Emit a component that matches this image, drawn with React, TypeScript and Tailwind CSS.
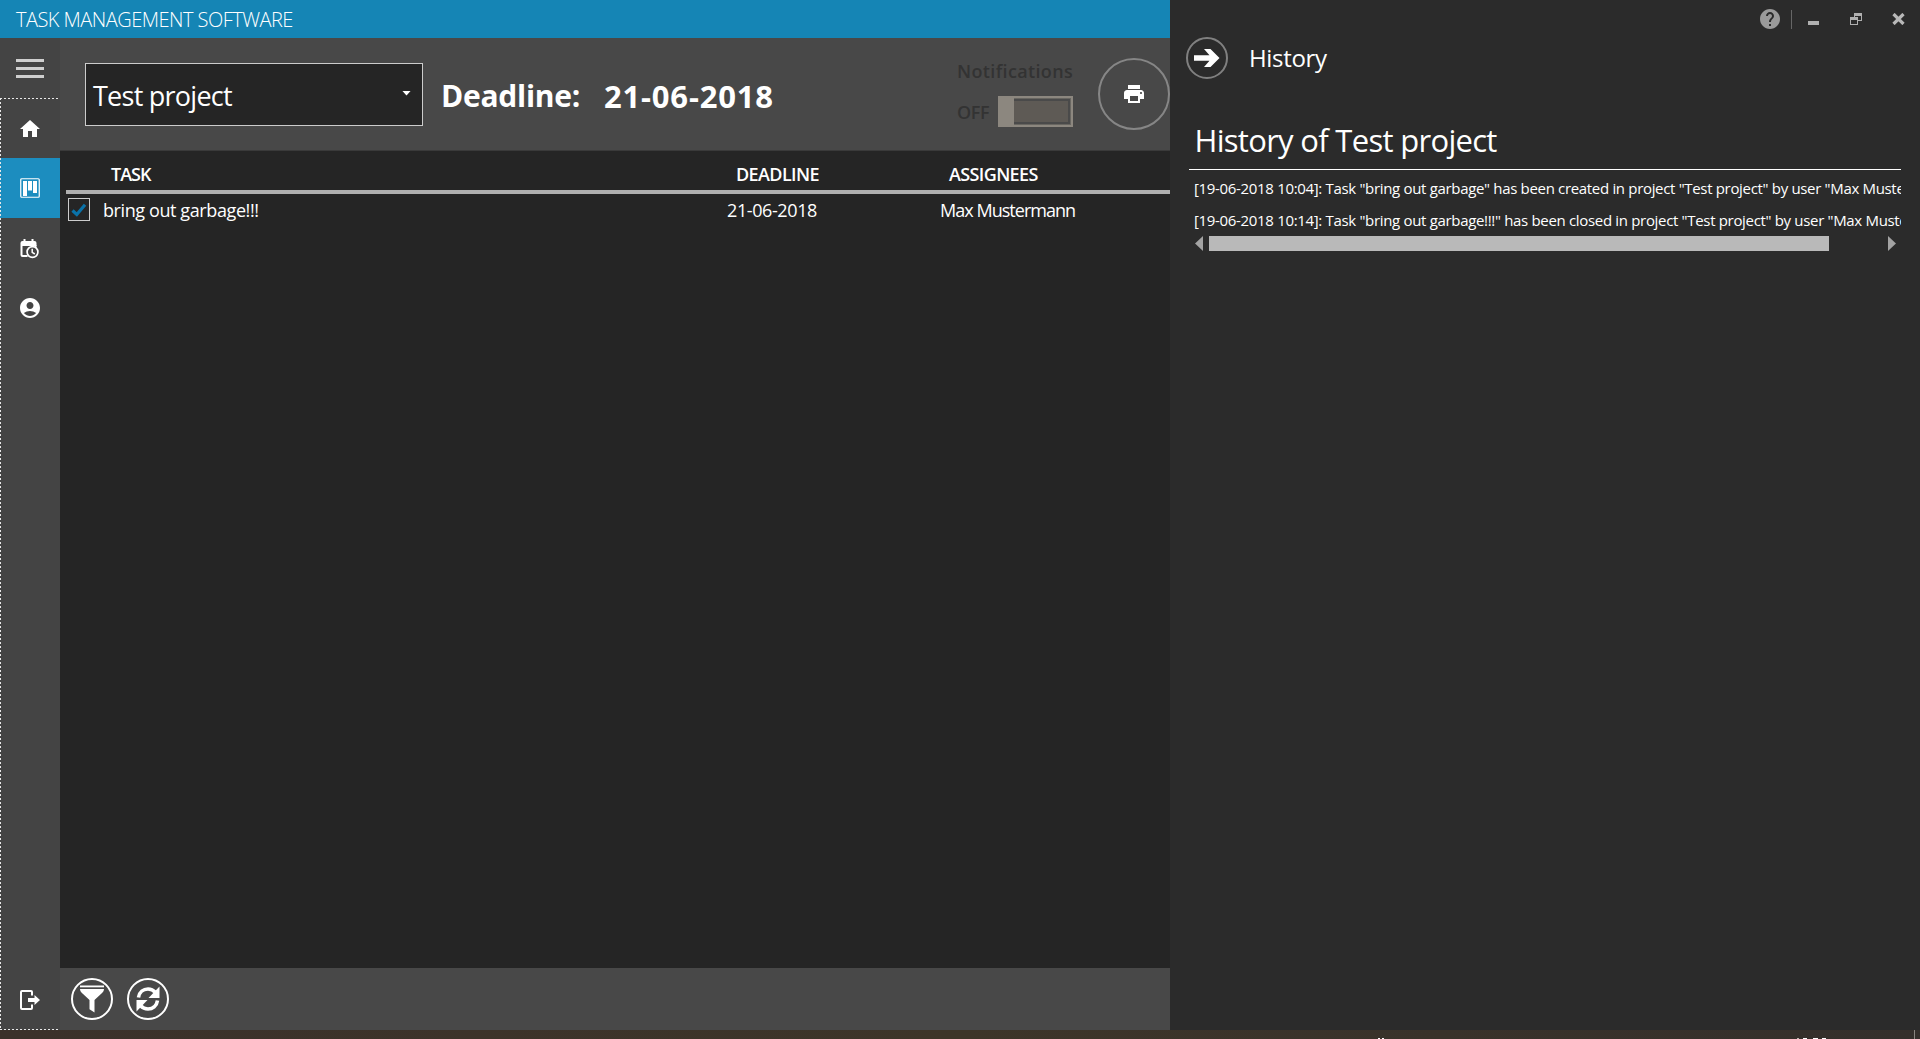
import type { ReactNode } from "react";
import { MdAccountCircle, MdHelp, MdHome, MdPrint } from "react-icons/md";

function NavItem({ active, children }: { active?: boolean; children: ReactNode }) {
  return (
    <button
      className={
        active
          ? "flex h-[60px] w-full items-center justify-center bg-[#1c8dbf]"
          : "flex h-[60px] w-full items-center justify-center"
      }
    >
      {children}
    </button>
  );
}

function BoardIcon() {
  return (
    <svg width="20" height="20" viewBox="0 0 20 20" fill="none">
      <rect x="0.75" y="0.75" width="18.5" height="18.5" rx="1" stroke="white" strokeWidth="1.2" />
      <rect x="3" y="3" width="4" height="15" fill="white" />
      <rect x="8" y="3" width="4" height="9.5" fill="white" />
      <rect x="13" y="3" width="4" height="12" fill="white" />
    </svg>
  );
}

function CalendarClockIcon() {
  return (
    <svg width="20" height="21" viewBox="0 0 20 21" fill="none">
      <path
        d="M3 1v2H2a2 2 0 0 0-2 2v12a2 2 0 0 0 2 2h5v-2H2V8h14V5a2 2 0 0 0-2-2h-1V1h-2v2H5V1z"
        fill="white"
        transform="translate(0.5 0)"
      />
      <path d="M15.500 7v4" stroke="white" strokeWidth="2" />
      <circle cx="12.5" cy="14" r="5.4" fill="#444444" stroke="white" strokeWidth="1.7" />
      <path d="M12.2 10.8v3.6l2.6 1.6" stroke="white" strokeWidth="1.5" />
    </svg>
  );
}

function LogoutIcon() {
  return (
    <svg width="20" height="20" viewBox="0 0 20 20" fill="none">
      <path d="M12 5.5V2a1 1 0 0 0-1-1H2a1 1 0 0 0-1 1v16a1 1 0 0 0 1 1h9a1 1 0 0 0 1-1v-3.500" stroke="white" strokeWidth="2" />
      <path d="M8 8h6.500V5L20 10l-5.500 5v-3H8z" fill="white" />
    </svg>
  );
}

function FilterIcon() {
  return (
    <svg width="26" height="28" viewBox="0 0 26 28" fill="white">
      <rect x="1" y="0.500" width="24" height="1.800" />
      <path d="M1 4h24c0 2-1 3-2.500 4.500L15.500 15v12.500l-5-3.200V15L3.500 8.500C2 7 1 6 1 4z" />
    </svg>
  );
}

function RefreshIcon() {
  return (
    <svg width="24" height="28" viewBox="0 0 24 28" fill="none">
      <path d="M2.500 12.500C3.300 6.800 7.500 4 12 4c3 0 5.500 1.200 7.300 3.200" stroke="white" strokeWidth="3.600" />
      <path d="M23.500 1.500V13H12.500z" fill="white" />
      <path d="M21.500 15.500C20.700 21.200 16.500 24 12 24c-3 0-5.500-1.200-7.300-3.200" stroke="white" strokeWidth="3.600" />
      <path d="M0.500 26.500V15h11z" fill="white" />
    </svg>
  );
}

function Sidebar() {
  return (
    <nav className="flex w-[60px] shrink-0 flex-col bg-[#444444]">
      <button className="flex h-[60px] flex-col items-center justify-center gap-[5px]">
        <span className="h-[3px] w-7 bg-[#cfcfcf]" />
        <span className="h-[3px] w-7 bg-[#cfcfcf]" />
        <span className="h-[3px] w-7 bg-[#cfcfcf]" />
      </button>
      <div className="relative flex flex-1 flex-col">
        <NavItem>
          <MdHome className="mt-0.5" size={24} color="white" />
        </NavItem>
        <NavItem active>
          <BoardIcon />
        </NavItem>
        <NavItem>
          <CalendarClockIcon />
        </NavItem>
        <NavItem>
          <MdAccountCircle size={24} color="white" />
        </NavItem>
        <div className="mt-auto">
          <NavItem>
            <LogoutIcon />
          </NavItem>
        </div>
        <i className="absolute inset-x-0 top-0 h-px bg-[repeating-linear-gradient(90deg,#e8e8e8_0_2px,transparent_2px_4px)]" />
        <i className="absolute inset-x-0 bottom-0 h-px bg-[repeating-linear-gradient(90deg,#e8e8e8_0_2px,transparent_2px_4px)]" />
        <i className="absolute inset-y-0 left-0 w-px bg-[repeating-linear-gradient(180deg,#e8e8e8_0_2px,transparent_2px_4px)]" />
      </div>
    </nav>
  );
}

function Header() {
  return (
    <header className="flex h-[113px] items-start border-b border-[#3a3a3a] bg-[#484848] pl-[25px]">
      <div className="mt-[25px] flex h-[63px] w-[338px] items-center justify-between border border-[#cccccc] bg-[#252525] pr-[11px] pl-[7px] text-[27px] tracking-[-0.75px]">
        <span className="pt-[3px]">Test project</span>
        <span className="mb-[3px] h-[5px] w-[9px] bg-white [clip-path:polygon(0_0,100%_0,50%_100%)]" />
      </div>
      <h1 className="mt-[38px] ml-[18px] w-[163px] text-[30px] leading-[40px] font-bold tracking-[-0.25px]">Deadline:</h1>
      <span className="mt-[38px] w-[353px] text-[31px] leading-[40px] font-bold tracking-[0.8px]">21-06-2018</span>
      <div className="mt-[21px] w-[141px] shrink-0 text-lg font-semibold text-[#333333]">
        <div className="leading-6 tracking-[0.36px]">Notifications</div>
        <div className="mt-[13px] flex h-[31px] items-center">
          <span className="w-[41px] tracking-[-0.4px]">OFF</span>
          <span className="flex h-[31px] w-[75px] border-2 border-l-0 border-[#8c877f] bg-[#4a4a4a]">
            <span className="w-4 bg-[#8c877f]" />
            <span className="flex flex-1 border-y border-r border-[#686661] py-[2px] pr-[2px]">
              <span className="flex-1 bg-[#5e5a55]" />
            </span>
          </span>
        </div>
      </div>
      <button className="mt-5 flex h-[72px] w-[72px] shrink-0 items-center justify-center rounded-full border-2 border-[#868686]">
        <MdPrint size={24} color="white" />
      </button>
    </header>
  );
}

function TaskTable() {
  return (
    <main className="flex-1 bg-[#252525] pl-1.5 text-lg">
      <div className="flex h-[43px] items-center border-b-4 border-[#b0b0b0] pt-[7px] font-semibold">
        <span className="w-[626px] pl-[45px] tracking-[-1px]">TASK</span>
        <span className="w-[213px] pl-[44px] tracking-[-0.6px]">DEADLINE</span>
        <span className="pl-[44px] tracking-[-0.62px]">ASSIGNEES</span>
      </div>
      <div className="flex h-8 items-center">
        <span className="-mt-px ml-0.5 flex h-[23px] w-[22px] items-center justify-center border border-[#cccccc]">
          <svg width="16" height="14" viewBox="0 0 16 14" fill="none">
            <path d="M1.500 7.500l4.300 4L14 1.800" stroke="#0a72a8" strokeWidth="3.200" />
          </svg>
        </span>
        <span className="ml-[13px] w-[624px] tracking-[-0.4px]">bring out garbage!!!</span>
        <span className="w-[213px] tracking-[-0.4px]">21-06-2018</span>
        <span className="tracking-[-0.97px]">Max Mustermann</span>
      </div>
    </main>
  );
}

function Footer() {
  return (
    <footer className="flex h-[62px] items-center gap-[14px] bg-[#484848] pl-[10.500px]">
      <button className="flex h-[42px] w-[42px] items-center justify-center rounded-full border-2 border-white">
        <FilterIcon />
      </button>
      <button className="flex h-[42px] w-[42px] items-center justify-center rounded-full border-2 border-white">
        <RefreshIcon />
      </button>
    </footer>
  );
}

function WindowControls() {
  return (
    <div className="flex h-[38px] items-center justify-end pr-[15px] text-[#b0b0b0]">
      <MdHelp size={24} color="#9a9a9a" />
      <span className="mr-[16px] ml-[9px] h-[19px] w-px bg-[#666666]" />
      <span className="mt-[8px] h-1 w-[11px] bg-[#b0b0b0]" />
      <svg className="ml-[31px]" width="12" height="12" viewBox="0 0 12 12" fill="none" shapeRendering="crispEdges">
        <path d="M4 4V0h8v8H8V7h3V3H5v1z" fill="#b0b0b0" />
        <path d="M0 4h8v8H0zM1 7v4h6V7z" fill="#b0b0b0" fillRule="evenodd" />
      </svg>
      <svg className="ml-[30px]" width="13" height="12" viewBox="0 0 13 12" fill="none">
        <path d="M1.500 1l10 10M11.500 1l-10 10" stroke="#b8b8b8" strokeWidth="3.200" />
      </svg>
    </div>
  );
}

const events = [
  '[19-06-2018 10:04]: Task "bring out garbage" has been created in project "Test project" by user "Max Mustermann".',
  '[19-06-2018 10:14]: Task "bring out garbage!!!" has been closed in project "Test project" by user "Max Mustermann".',
];

function HistoryPanel() {
  return (
    <aside className="flex w-[750px] shrink-0 flex-col bg-[#2b2b2b]">
      <WindowControls />
      <div className="-mt-[1px] flex h-[42px] items-center pl-[15.500px]">
        <button className="flex h-[42px] w-[42px] items-center justify-center rounded-full border-2 border-[#808080]">
          <svg width="26" height="18" viewBox="0 0 26 18" fill="white">
            <path d="M0 6.200h15.500L10 0h6.500L25.500 9l-9 9H10l5.500-6.200H0z" />
          </svg>
        </button>
        <h2 className="ml-[21.500px] text-2xl tracking-[-0.33px]">History</h2>
      </div>
      <section className="mr-[19px] ml-[19px]">
        <h3 className="mt-[38px] h-[53px] border-b border-white pl-[5.500px] text-[31px] leading-[47px] tracking-[-0.7px]">
          History of Test project
        </h3>
        <ul className="overflow-hidden pt-[2px] pl-[5px] text-[15px] tracking-[-0.325px] whitespace-nowrap">
          {events.map((e) => (
            <li key={e} className="h-8 leading-8">
              {e}
            </li>
          ))}
        </ul>
        <div className="flex h-[15px] pr-[5px] pl-[6px]">
          <span className="w-2 bg-[#a3a3a3] [clip-path:polygon(100%_0,100%_100%,0_50%)]" />
          <span className="ml-1.5 w-[620px] bg-[#b9b9b9]" />
          <span className="ml-auto w-2 bg-[#a3a3a3] [clip-path:polygon(0_0,100%_50%,0_100%)]" />
        </div>
      </section>
    </aside>
  );
}

function DesktopStrip() {
  return (
    <div className="flex h-[9px] items-end bg-linear-to-r from-[#3b312a] via-[#3d3529] to-[#352f2b]">
      <span className="ml-[1378px] h-px w-[2px] bg-white" />
      <span className="ml-[2px] h-px w-[2px] bg-white" />
      <span className="ml-[413px] h-px w-[2px] bg-[#c0b8b4]" />
      <span className="ml-[4px] h-px w-[4px] bg-white" />
      <span className="ml-[6px] h-px w-[5px] bg-white" />
      <span className="ml-[4px] h-px w-[4px] bg-white" />
      <span className="ml-auto mr-[5px] h-[9px] w-px bg-[#8a8580]" />
    </div>
  );
}

export default function App() {
  return (
    <div className="flex h-[1039px] w-[1920px] flex-col overflow-hidden bg-[#252525] font-['Open_Sans','Noto_Sans',sans-serif] text-white">
      <div className="flex h-[1030px]">
        <div className="flex w-[1170px] flex-col">
          <div className="flex h-[38px] items-center bg-[#1585b5] pt-[2px] pl-4 text-xl font-light tracking-[-0.52px]">
            TASK MANAGEMENT SOFTWARE
          </div>
          <div className="flex flex-1">
            <Sidebar />
            <div className="flex flex-1 flex-col">
              <Header />
              <TaskTable />
              <Footer />
            </div>
          </div>
        </div>
        <HistoryPanel />
      </div>
      <DesktopStrip />
    </div>
  );
}
